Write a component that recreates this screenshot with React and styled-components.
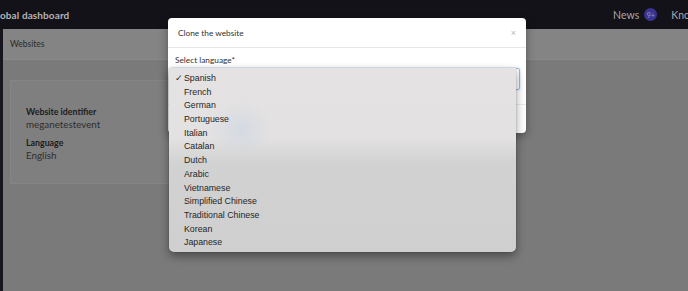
import React from 'react';
import styled, { createGlobalStyle } from 'styled-components';

const GlobalStyle = createGlobalStyle`
  html, body {
    margin: 0;
    padding: 0;
    background: #7a7a7b;
  }
  #root {
    width: 688px;
    height: 291px;
    overflow: hidden;
    position: relative;
    font-family: Lato, "Open Sans", sans-serif;
  }
`;

const Navbar = styled.header`
  height: 29px;
  background: #131218;
  display: flex;
  align-items: center;
  white-space: nowrap;
  overflow: hidden;
`;

const Brand = styled.div`
  color: #b4b4b7;
  font-size: 10px;
  font-weight: 700;
  letter-spacing: 0.1px;
  flex: 1;
`;

const NavLink = styled.div`
  display: flex;
  align-items: center;
  gap: 5px;
  color: #a7a7ab;
  font-size: 10.5px;
  flex-shrink: 0;
  margin-left: ${(p) => p.$gap || 0}px;
  margin-right: ${(p) => p.$overflow || 0}px;
`;

const Badge = styled.span`
  width: 13px;
  height: 13px;
  border-radius: 50%;
  background: #3a3490;
  color: #9c98c9;
  font-size: 7px;
  display: flex;
  align-items: center;
  justify-content: center;
`;

const Main = styled.div`
  display: flex;
  height: 262px;
`;

const SideEdge = styled.div`
  width: 3px;
  background: #17161c;
`;

const Content = styled.div`
  flex: 1;
  display: flex;
  flex-direction: column;
`;

const SubHeader = styled.div`
  height: 30px;
  background: #848484;
  border-bottom: 1px solid #8a8a8a;
  display: flex;
  align-items: center;
  padding-left: 7px;
  font-size: 8.5px;
  color: #2a2a2a;
`;

const Body = styled.div`
  padding: 20px 7px;
`;

const Card = styled.div`
  width: 400px;
  height: 104px;
  background: #7f7f7f;
  border: 1px solid #858585;
  box-sizing: border-box;
  padding: 24px 15px;
  display: flex;
  flex-direction: column;
`;

const FieldLabel = styled.div`
  font-size: 8.8px;
  font-weight: 700;
  color: #1b1b1b;
  line-height: 13px;
  margin-top: ${(p) => (p.$first ? 0 : 5)}px;
`;

const FieldValue = styled.div`
  font-size: 9.8px;
  color: #2e2e2e;
  line-height: 13px;
`;

const Modal = styled.div`
  position: absolute;
  left: 168px;
  top: 18px;
  width: 358px;
  height: 115px;
  background: #fff;
  border-radius: 4px;
  box-shadow: 0 3px 10px rgba(0, 0, 0, 0.35);
  display: flex;
  flex-direction: column;
`;

const ModalHeader = styled.div`
  height: 29px;
  border-bottom: 1px solid #e6e6e6;
  display: flex;
  align-items: center;
  justify-content: space-between;
  padding: 0 10px;
  font-size: 8.3px;
  color: #333;
`;

const Close = styled.span`
  color: #b8b8b8;
  font-size: 9px;
  font-family: "Liberation Sans", Arial, sans-serif;
`;

const ModalBody = styled.div`
  padding: 7px 6px 14px 7px;
  border-bottom: 1px solid #ececec;
`;

const Label = styled.div`
  font-size: 8.3px;
  color: #333;
  line-height: 11px;
  margin-bottom: 2px;
`;

const SelectBox = styled.div`
  margin-left: -5px;
  height: 20px;
  border: 1px solid #9cbbd9;
  border-radius: 2px;
  box-shadow: 0 0 2px rgba(102, 160, 220, 0.5);
  display: flex;
  align-items: center;
  justify-content: flex-end;
  padding-right: 3px;
  font-size: 5px;
  color: #777;
`;

const Dropdown = styled.ul`
  position: absolute;
  left: 169px;
  top: 68px;
  width: 347px;
  height: 184px;
  margin: 0;
  padding: 4px 0 0 0;
  box-sizing: border-box;
  list-style: none;
  border-radius: 0 0 5px 5px;
  background:
    radial-gradient(ellipse 30px 28px at 72px 62px, rgba(200, 212, 228, 0.55), transparent),
    linear-gradient(#e4e2e2 0%, #e3e1e1 38%, #d2d2d2 52%, #cfcfcf 100%);
  box-shadow: 0 4px 10px rgba(0, 0, 0, 0.4), 0 0 1px rgba(0, 0, 0, 0.5);
  font-family: "Liberation Sans", Arial, sans-serif;
  font-size: 8.8px;
  color: #262626;
`;

const Option = styled.li`
  height: 13.7px;
  line-height: 13.7px;
  padding-left: 15px;
  position: relative;
`;

const Check = styled.span`
  position: absolute;
  left: 6px;
  font-size: 8.5px;
`;

const languages = [
  'Spanish',
  'French',
  'German',
  'Portuguese',
  'Italian',
  'Catalan',
  'Dutch',
  'Arabic',
  'Vietnamese',
  'Simplified Chinese',
  'Traditional Chinese',
  'Korean',
  'Japanese',
];

export default function App() {
  return (
    <>
      <GlobalStyle />
      <Navbar>
        <Brand>obal dashboard</Brand>
        <NavLink>
          News <Badge>9+</Badge>
        </NavLink>
        <NavLink $gap={14} $overflow={-2}>Kno</NavLink>
      </Navbar>
      <Main>
        <SideEdge />
        <Content>
          <SubHeader>Websites</SubHeader>
          <Body>
            <Card>
              <FieldLabel $first>Website identifier</FieldLabel>
              <FieldValue>meganetestevent</FieldValue>
              <FieldLabel>Language</FieldLabel>
              <FieldValue>English</FieldValue>
            </Card>
          </Body>
        </Content>
      </Main>
      <Modal>
        <ModalHeader>
          <span>Clone the website</span>
          <Close>×</Close>
        </ModalHeader>
        <ModalBody>
          <Label>Select language*</Label>
          <SelectBox>▾</SelectBox>
        </ModalBody>
      </Modal>
      <Dropdown>
        {languages.map((lang, i) => (
          <Option key={lang}>
            {i === 0 && <Check>✓</Check>}
            {lang}
          </Option>
        ))}
      </Dropdown>
    </>
  );
}
